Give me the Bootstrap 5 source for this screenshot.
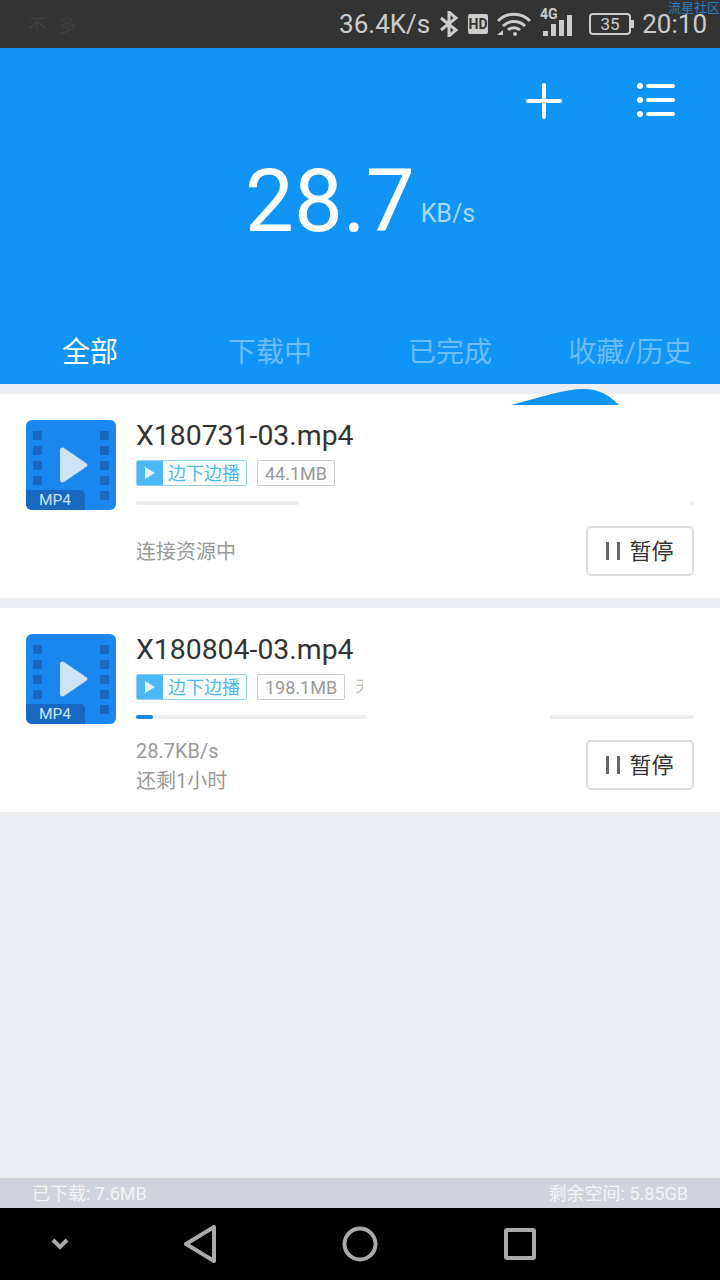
<!DOCTYPE html>
<html lang="zh-CN">
<head>
    <meta charset="UTF-8">
    <meta name="viewport" content="width=device-width, initial-scale=1.0">
    <link href="https://cdn.jsdelivr.net/npm/bootstrap@5.3.2/dist/css/bootstrap.min.css" rel="stylesheet">
    <script src="https://cdn.jsdelivr.net/npm/bootstrap@5.3.2/dist/js/bootstrap.bundle.min.js"></script>
    <title>下载</title>
    <style>
        body { font-family: Roboto, "Noto Sans CJK SC", sans-serif; background: #eceef0; }
        .phone { width: 720px; height: 1280px; overflow: hidden; }
        .status-bar { height: 48px; background: #333; color: #ccc; font-size: 26px; line-height: 20px; padding-right: 13px; }
        .status-left { color: #404040; font-size: 18px; left: 28px; top: 16px; word-spacing: 8px; }
        .watermark { color: #2c7dbd; font-size: 13px; line-height: 15px; right: 0; top: 0; }
        .top-panel { height: 336px; background: #1094f6; color: #fff; }
        .top-actions { height: 104px; padding-right: 45px; padding-top: 34px; gap: 74px; }
        .speed-row { height: 99px; padding-left: 245px; gap: 6px; }
        .speed-num { font-size: 87px; font-weight: 400; line-height: 100px; }
        .speed-unit { font-size: 25px; color: #a9d8fb; line-height: 30px; padding-bottom: 22px; }
        .tab-row { height: 133px; padding-top: 78px; }
        .tab-item { width: 180px; font-size: 28px; line-height: 48px; text-align: center; color: #6cbdf9; white-space: nowrap; }
        .tab-item.on { color: #fff; }
        .list-area { padding-top: 10px; }
        .wave { left: 511px; top: 5px; }
        .task-card { height: 204px; background: #fff; margin-bottom: 10px; padding: 26px 26px 0; }
        .file-icon { width: 90px; height: 90px; flex: none; margin-right: 20px; }
        .task-body { width: 558px; }
        .task-name { font-size: 28.4px; line-height: 30px; color: #333; padding-top: 1px; margin-bottom: 9px; }
        .play-tag { width: 111px; height: 26px; border: 1px solid #93d0ef; border-radius: 2px; overflow: hidden; color: #4ab8f2; font-size: 18px; }
        .play-tag-icon { width: 26px; background: #4ab8f9; flex: none; }
        .play-tag-text { padding-left: 5px; line-height: 26px; white-space: nowrap; }
        .size-tag { height: 26px; margin-left: 10px; padding: 0 7px; border: 1px solid #ccc; border-radius: 2px; color: #999; font-size: 18px; line-height: 26px; }
        .cut-text { width: 8px; margin-left: 10px; color: #bbb; font-size: 16px; line-height: 26px; overflow: hidden; white-space: nowrap; }
        .track { height: 4px; margin-top: 15px; background: #eceef0; border-radius: 2px; }
        .track-fill { height: 4px; background: #1487e0; border-radius: 2px; }
        .wipe { top: -3px; height: 10px; background: #fff; }
        .task-foot { height: 50px; margin-top: 21px; }
        .task-note { color: #999; font-size: 20px; line-height: 30px; padding-top: 2px; }
        .pause-btn { width: 108px; height: 50px; padding: 0; border: 2px solid #dcdcdc; border-radius: 5px; background: #fff; color: #333; font-size: 22px; gap: 9px; }
        .pause-bars { width: 14px; height: 18px; border-left: 3px solid #666; border-right: 3px solid #666; }
        .storage-bar { height: 30px; padding: 0 32px; background: #d0d3dc; color: #f4f5f7; font-size: 18px; line-height: 31px; }
        .nav-bar { height: 72px; background: #000; }
        .nav-cell { width: 160px; }
        .nav-cell.first { width: 120px; }
    </style>
</head>
<body>
    <div class="phone d-flex flex-column">
        <!-- status bar -->
        <div class="status-bar position-relative d-flex align-items-center justify-content-end">
            <span class="status-left position-absolute">不 多</span>
            <span class="watermark position-absolute">流星社区</span>
            <span>36.4K/s</span>
            <svg class="ms-2" width="22" height="26" viewBox="0 0 22 26" fill="none" stroke="#ccc" stroke-width="3"><path d="M3 7l15 12-7 6V1l7 6L3 19"/></svg>
            <svg class="ms-2" width="20" height="20" viewBox="0 0 20 20"><rect width="20" height="20" rx="2" fill="#ccc"/><text x="10" y="15" font-size="14" font-weight="700" text-anchor="middle" fill="#333" font-family="Roboto">HD</text></svg>
            <svg class="ms-2" width="36" height="26" viewBox="0 0 36 26" fill="none" stroke="#ccc" stroke-width="3"><path d="M2 10C11 1 25 1 34 10"/><path d="M7 15c6-6 16-6 22 0"/><path d="M12 19c3-3 9-3 12 0"/><circle cx="19" cy="23" r="2" fill="#ccc" stroke="none"/><path d="M1 24l6-5v5z" fill="#ccc" stroke="none"/></svg>
            <svg class="ms-2" width="33" height="36" viewBox="0 0 33 36" fill="#ccc"><text x="0" y="13" font-size="14" font-weight="700" font-family="Roboto">4G</text><rect x="3" y="25" width="5" height="5"/><rect x="11" y="18" width="5" height="12"/><rect x="19" y="14" width="5" height="16"/><rect x="27" y="9" width="5" height="21"/></svg>
            <svg class="ms-3" width="45" height="22" viewBox="0 0 45 22"><rect x="1" y="1" width="40" height="20" rx="3" fill="none" stroke="#ccc" stroke-width="2"/><rect x="42" y="7" width="3" height="8" fill="#ccc"/><text x="21" y="17" font-size="17" text-anchor="middle" fill="#ccc" font-family="Roboto">35</text></svg>
            <span class="ms-2">20:10</span>
        </div>

        <!-- blue panel -->
        <div class="top-panel">
            <div class="top-actions d-flex justify-content-end">
                <svg width="38" height="38" viewBox="0 0 38 38" stroke="#fff" stroke-width="4" stroke-linecap="round"><path d="M19 3v32M3 19h32"/></svg>
                <svg width="38" height="36" viewBox="0 0 38 36" stroke="#fff" stroke-width="4" stroke-linecap="round"><path d="M11 4h25M11 18h25M11 32h25"/><g fill="#fff" stroke="none"><circle cx="3" cy="4" r="3"/><circle cx="3" cy="18" r="3"/><circle cx="3" cy="32" r="3"/></g></svg>
            </div>
            <div class="speed-row d-flex align-items-end">
                <span class="speed-num">28.7</span>
                <span class="speed-unit">KB/s</span>
            </div>
            <div class="tab-row d-flex">
                <div class="tab-item on">全部</div>
                <div class="tab-item">下载中</div>
                <div class="tab-item">已完成</div>
                <div class="tab-item">收藏/历史</div>
            </div>
        </div>

        <!-- tasks -->
        <div class="list-area flex-grow-1 position-relative">
            <svg class="wave position-absolute" width="108" height="16" viewBox="0 0 108 16"><path d="M0 16C30 8 54 0 72 0c16 0 26 6 36 16z" fill="#1094f6"/></svg>

            <div class="task-card d-flex">
                <svg class="file-icon" viewBox="0 0 90 90"><use href="#film-icon"/><text x="13" y="85" font-size="15.5" fill="#cfe2f8" font-family="Roboto">MP4</text></svg>
                <div class="task-body">
                    <div class="task-name">X180731-03.mp4</div>
                    <div class="d-flex">
                        <div class="play-tag d-flex">
                            <div class="play-tag-icon d-flex align-items-center justify-content-center"><svg width="10" height="12" viewBox="0 0 10 12"><path d="M0 0l10 6-10 6z" fill="#e4f4fe"/></svg></div>
                            <div class="play-tag-text">边下边播</div>
                        </div>
                        <div class="size-tag">44.1MB</div>
                    </div>
                    <div class="track position-relative">
                        <div class="wipe position-absolute" style="left: 162px; width: 392px;"></div>
                    </div>
                    <div class="task-foot d-flex justify-content-between align-items-center">
                        <div class="task-note">连接资源中</div>
                        <button class="pause-btn btn d-flex align-items-center justify-content-center"><span class="pause-bars"></span>暂停</button>
                    </div>
                </div>
            </div>

            <div class="task-card d-flex">
                <svg class="file-icon" viewBox="0 0 90 90"><use href="#film-icon"/><text x="13" y="85" font-size="15.5" fill="#cfe2f8" font-family="Roboto">MP4</text></svg>
                <div class="task-body">
                    <div class="task-name">X180804-03.mp4</div>
                    <div class="d-flex">
                        <div class="play-tag d-flex">
                            <div class="play-tag-icon d-flex align-items-center justify-content-center"><svg width="10" height="12" viewBox="0 0 10 12"><path d="M0 0l10 6-10 6z" fill="#e4f4fe"/></svg></div>
                            <div class="play-tag-text">边下边播</div>
                        </div>
                        <div class="size-tag">198.1MB</div>
                        <div class="cut-text">天</div>
                    </div>
                    <div class="track position-relative">
                        <div class="track-fill" style="width: 17px;"></div>
                        <div class="wipe position-absolute" style="left: 231px; width: 183px;"></div>
                    </div>
                    <div class="task-foot d-flex justify-content-between align-items-center">
                        <div class="task-note">28.7KB/s<br>还剩1小时</div>
                        <button class="pause-btn btn d-flex align-items-center justify-content-center"><span class="pause-bars"></span>暂停</button>
                    </div>
                </div>
            </div>
        </div>

        <div class="storage-bar d-flex justify-content-between">
            <span>已下载: 7.6MB</span>
            <span>剩余空间: 5.85GB</span>
        </div>

        <!-- android nav -->
        <div class="nav-bar d-flex">
            <div class="nav-cell first d-flex align-items-center justify-content-center">
                <svg width="18" height="12" viewBox="0 0 18 12" fill="none" stroke="#aaa" stroke-width="4"><path d="M2 2l7 7 7-7"/></svg>
            </div>
            <div class="nav-cell d-flex align-items-center justify-content-center">
                <svg width="34" height="38" viewBox="0 0 34 38" fill="none" stroke="#aaa" stroke-width="4" stroke-linejoin="round"><path d="M31 2v34L3 19z"/></svg>
            </div>
            <div class="nav-cell d-flex align-items-center justify-content-center">
                <svg width="36" height="36" viewBox="0 0 36 36" fill="none" stroke="#aaa" stroke-width="4"><circle cx="18" cy="18" r="15.5"/></svg>
            </div>
            <div class="nav-cell d-flex align-items-center justify-content-center">
                <svg width="32" height="32" viewBox="0 0 32 32" fill="none" stroke="#aaa" stroke-width="4" stroke-linejoin="round"><rect x="2" y="2" width="28" height="28" rx="1"/></svg>
            </div>
        </div>
    </div>

    <svg width="0" height="0" class="position-absolute">
        <symbol id="film-icon" viewBox="0 0 90 90">
            <rect width="90" height="90" rx="6" fill="#1a87ee"/>
            <g fill="#1668c0">
                <rect x="7" y="11" width="9" height="9"/><rect x="7" y="26" width="9" height="9"/><rect x="7" y="41" width="9" height="9"/><rect x="7" y="56" width="9" height="9"/>
                <rect x="74" y="11" width="9" height="9"/><rect x="74" y="26" width="9" height="9"/><rect x="74" y="41" width="9" height="9"/><rect x="74" y="56" width="9" height="9"/><rect x="74" y="71" width="9" height="9"/>
                <path d="M0 70h54c3 0 5 2 5 5v15H6c-3 0-6-3-6-6z"/>
            </g>
            <path d="M34 30c0-2 2-3 4-2l22 15c2 1 2 3 0 4L38 62c-2 1-4 0-4-2z" fill="#cfe2f8"/>
        </symbol>
    </svg>
</body>
</html>
